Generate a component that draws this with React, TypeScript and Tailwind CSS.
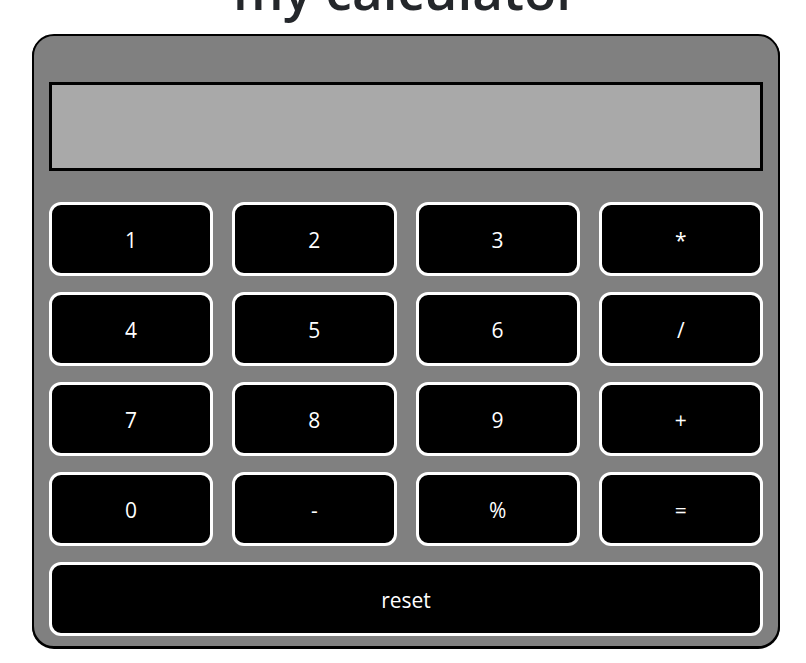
const keys = ["1", "2", "3", "*", "4", "5", "6", "/", "7", "8", "9", "+", "0", "-", "%", "="];

function Key({ label, wide = false }: { label: string; wide?: boolean }) {
  return (
    <button
      className={`h-[74px] pt-[4px] rounded-[12px] border-[3px] border-white bg-black text-white text-[21px] font-['Open_Sans',sans-serif] ${
        wide ? "col-span-4" : ""
      }`}
    >
      {label}
    </button>
  );
}

export default function App() {
  return (
    <div className="min-h-screen bg-white overflow-hidden">
      <h1 className="text-center text-[53px] leading-none font-semibold text-[#24272b] font-['Open_Sans',sans-serif] -mt-[37px] h-[71px] ml-[6px]">
        my calculator
      </h1>
      <div className="ml-[32px] w-[748px] h-[614px] rounded-[22px] border-2 border-black bg-[#808080] shadow-[0_1px_0_#000] px-[15px] pt-[46px]">
        <div className="h-[89px] border-[3px] border-black bg-[#a9a9a9]" />
        <div className="mt-[31px] grid grid-cols-4 gap-x-[19px] gap-y-[16px]">
          {keys.map((k) => (
            <Key key={k} label={k} />
          ))}
          <Key label="reset" wide />
        </div>
      </div>
    </div>
  );
}
